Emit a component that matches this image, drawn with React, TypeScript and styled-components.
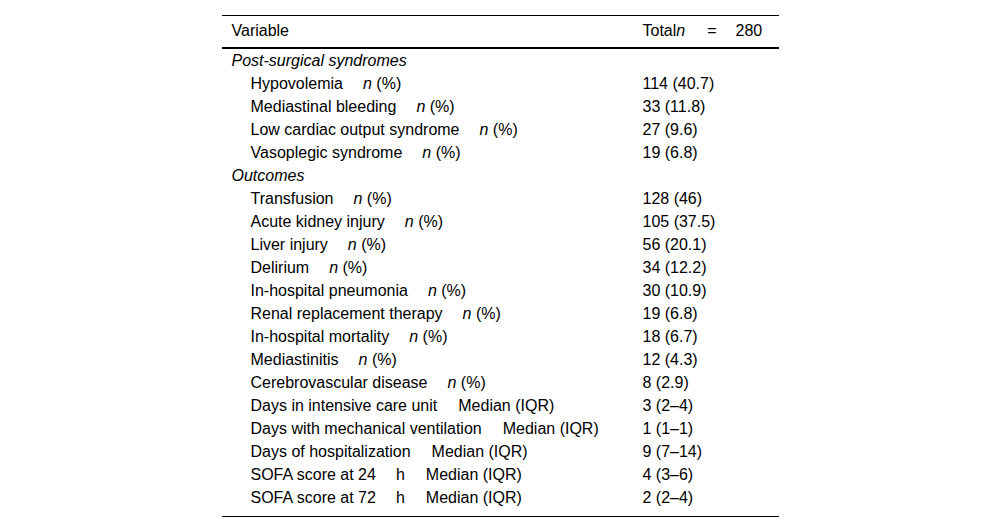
import React from "react";
import styled, { createGlobalStyle } from "styled-components";

const GlobalStyle = createGlobalStyle`
  html, body {
    margin: 0;
    padding: 0;
    background: #ffffff;
  }
  body {
    font-family: "Liberation Sans", Arial, sans-serif;
    color: #000000;
  }
`;

const Page = styled.div`
  display: flex;
  justify-content: center;
  padding-top: 15px;
`;

const Table = styled.table`
  width: 557px;
  border-collapse: collapse;
  border-top: 1px solid #000;
  border-bottom: 1px solid #000;
  font-size: 16px;
  line-height: 18px;
`;

const HeadCell = styled.th<{ $first?: boolean }>`
  text-align: left;
  font-weight: normal;
  padding: 6px 10px 7px 10px;
  border-bottom: 2px solid #000;
  white-space: nowrap;
  width: ${(p) => (p.$first ? "391px" : "auto")};
`;

const Cell = styled.td<{ $indent?: boolean; $last?: boolean }>`
  padding: 3px 10px ${(p) => (p.$last ? "9px" : "2px")}
    ${(p) => (p.$indent ? "29px" : "10px")};
  vertical-align: top;
  white-space: nowrap;
`;

const GroupCell = styled.td`
  padding: 3px 10px 2px 10px;
  font-style: italic;
`;

const Unit = styled.span<{ $gap: number }>`
  margin-left: ${(p) => p.$gap}px;
`;

const Ital = styled.i`
  font-style: italic;
`;

const Eq = styled.span`
  margin: 0 19px 0 22px;
`;

type Item = {
  label: string;
  unit: "n" | "median";
  value: string;
  hour?: string;
};

type Group = { title: string; items: Item[] };

const groups: Group[] = [
  {
    title: "Post-surgical syndromes",
    items: [
      { label: "Hypovolemia", unit: "n", value: "114 (40.7)" },
      { label: "Mediastinal bleeding", unit: "n", value: "33 (11.8)" },
      { label: "Low cardiac output syndrome", unit: "n", value: "27 (9.6)" },
      { label: "Vasoplegic syndrome", unit: "n", value: "19 (6.8)" },
    ],
  },
  {
    title: "Outcomes",
    items: [
      { label: "Transfusion", unit: "n", value: "128 (46)" },
      { label: "Acute kidney injury", unit: "n", value: "105 (37.5)" },
      { label: "Liver injury", unit: "n", value: "56 (20.1)" },
      { label: "Delirium", unit: "n", value: "34 (12.2)" },
      { label: "In-hospital pneumonia", unit: "n", value: "30 (10.9)" },
      { label: "Renal replacement therapy", unit: "n", value: "19 (6.8)" },
      { label: "In-hospital mortality", unit: "n", value: "18 (6.7)" },
      { label: "Mediastinitis", unit: "n", value: "12 (4.3)" },
      { label: "Cerebrovascular disease", unit: "n", value: "8 (2.9)" },
      { label: "Days in intensive care unit", unit: "median", value: "3 (2–4)" },
      { label: "Days with mechanical ventilation", unit: "median", value: "1 (1–1)" },
      { label: "Days of hospitalization", unit: "median", value: "9 (7–14)" },
      { label: "SOFA score at 24", hour: "h", unit: "median", value: "4 (3–6)" },
      { label: "SOFA score at 72", hour: "h", unit: "median", value: "2 (2–4)" },
    ],
  },
];

function UnitText({ unit }: { unit: Item["unit"] }) {
  if (unit === "n") {
    return (
      <Unit $gap={20}>
        <Ital>n</Ital> (%)
      </Unit>
    );
  }
  return <Unit $gap={21}>Median (IQR)</Unit>;
}

export default function App() {
  const lastGroup = groups.length - 1;
  return (
    <>
      <GlobalStyle />
      <Page>
        <Table>
          <thead>
            <tr>
              <HeadCell $first>Variable</HeadCell>
              <HeadCell>
                Total<Ital>n</Ital>
                <Eq>=</Eq>280
              </HeadCell>
            </tr>
          </thead>
          <tbody>
            {groups.map((g, gi) => (
              <React.Fragment key={g.title}>
                <tr>
                  <GroupCell colSpan={2}>{g.title}</GroupCell>
                </tr>
                {g.items.map((it, ii) => {
                  const last = gi === lastGroup && ii === g.items.length - 1;
                  return (
                    <tr key={it.label}>
                      <Cell $indent $last={last}>
                        {it.label}
                        {it.hour && <Unit $gap={20}>{it.hour}</Unit>}
                        <UnitText unit={it.unit} />
                      </Cell>
                      <Cell $last={last}>{it.value}</Cell>
                    </tr>
                  );
                })}
              </React.Fragment>
            ))}
          </tbody>
        </Table>
      </Page>
    </>
  );
}
